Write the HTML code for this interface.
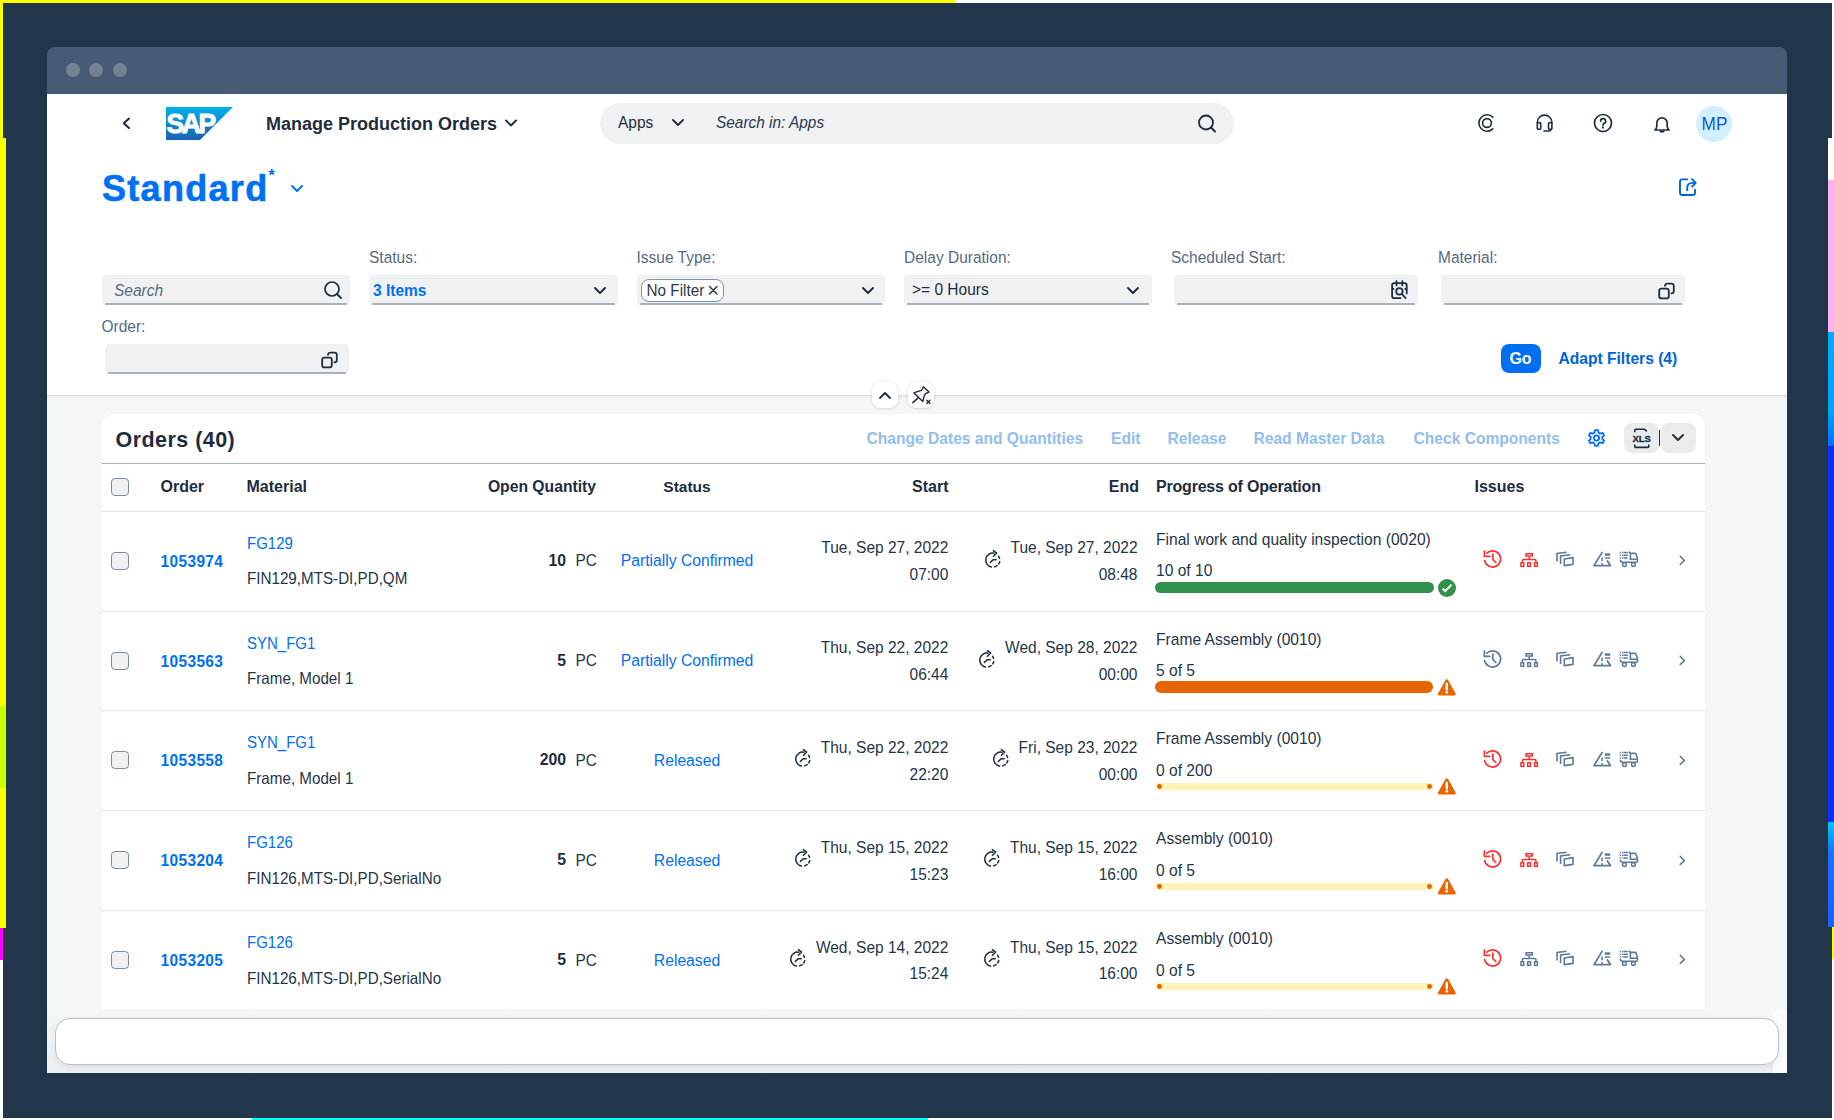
<!DOCTYPE html>
<html><head><meta charset="utf-8">
<style>
*{box-sizing:border-box;margin:0;padding:0}
html,body{width:1834px;height:1120px;overflow:hidden}
body{background:#22364b;font-family:"Liberation Sans",sans-serif;color:#1d2d3e;position:relative}
.a{position:absolute}
.t{position:absolute;white-space:nowrap;line-height:1}
.r{text-align:right}
.dot{position:absolute;width:14px;height:14px;border-radius:50%;background:#748495;top:63px}
.lbl{font-size:15.5px;color:#556b82}
.fld{position:absolute;background:#eff1f2;border-radius:4px;height:30px;top:275px}
.fld:after{content:"";position:absolute;left:3px;right:3px;bottom:0;height:1.8px;background:#a7b2bd;border-radius:1px}
.act{font-size:15.6px;color:#92bdee;font-weight:bold}
.hd{font-size:16px;font-weight:bold;color:#1d2d3e}
.cb{position:absolute;width:18px;height:18px;border:1.1px solid #788ca0;border-radius:4px;background:#eff1f2;left:111px}
.ico{position:absolute;overflow:visible}
.sy{transform:scaleY(1.1);transform-origin:0 0.85em}
</style></head><body>
<!-- edge strips -->
<div class="a" style="left:0;top:0;width:955px;height:3px;background:#ffff00"></div>
<div class="a" style="left:955px;top:0;width:879px;height:3px;background:#fdfdfd"></div>
<div class="a" style="left:0;top:0;width:3px;height:138px;background:#ffff00"></div>
<div class="a" style="left:0;top:138px;width:6px;height:790px;background:#ffff00"></div>
<div class="a" style="left:0;top:705.5px;width:6px;height:82px;background:#c8ff00"></div>
<div class="a" style="left:0;top:927.5px;width:3px;height:32.5px;background:#ff00ff"></div>
<div class="a" style="left:0;top:960px;width:3px;height:160px;background:#fdfdfd"></div>
<div class="a" style="left:1832px;top:0;width:2px;height:138px;background:#fdfdfd"></div>
<div class="a" style="left:1828px;top:138px;width:6px;height:42px;background:#ffffff"></div>
<div class="a" style="left:1828px;top:180px;width:6px;height:152px;background:#ffb0f4"></div>
<div class="a" style="left:1828px;top:332px;width:6px;height:114px;background:linear-gradient(#00acff,#00a2ff 70%,#0a6cff)"></div>
<div class="a" style="left:1828px;top:446px;width:6px;height:376px;background:#0a2cff"></div>
<div class="a" style="left:1828px;top:822px;width:6px;height:105px;background:linear-gradient(#00c8ff,#1a70ff 30%,#1a60ff)"></div>
<div class="a" style="left:1832px;top:927px;width:2px;height:32px;background:#ffff00"></div>
<div class="a" style="left:1832px;top:959px;width:2px;height:161px;background:#fdfdfd"></div>
<div class="a" style="left:0;top:1117.5px;width:252px;height:2.5px;background:#fdfdfd"></div>
<div class="a" style="left:252px;top:1117.5px;width:676px;height:2.5px;background:#00ffff"></div>
<div class="a" style="left:928px;top:1117.5px;width:906px;height:2.5px;background:#fdfdfd"></div>

<!-- window -->
<div class="a" style="left:47px;top:47px;width:1740px;height:60px;background:#475c74;border-radius:8px 8px 0 0"></div>
<div class="dot" style="left:66px"></div>
<div class="dot" style="left:89px"></div>
<div class="dot" style="left:113px"></div>
<div class="a" style="left:47px;top:94px;width:1740px;height:979px;background:#f5f6f7"></div>
<div class="a" style="left:47px;top:94px;width:1740px;height:302px;background:#fff;border-bottom:1px solid #d9dcdf"></div>
<div class="a" style="left:47px;top:396px;width:1740px;height:5px;background:linear-gradient(rgba(0,20,40,0.035),rgba(0,20,40,0))"></div>

<!-- SHELLBAR -->
<svg class="ico" style="left:118px;top:113px" width="16" height="20" viewBox="0 0 16 20"><path d="M11 5.6 L5.9 10.3 L11 15" fill="none" stroke="#1d2d3e" stroke-width="2.1" stroke-linecap="round" stroke-linejoin="round"/></svg>
<svg class="ico" style="left:166px;top:106px" width="68" height="34" viewBox="0 0 68 34">
<defs><linearGradient id="sapg" x1="0" y1="0" x2="0" y2="1"><stop offset="0" stop-color="#00b1eb"/><stop offset="1" stop-color="#1a62b4"/></linearGradient></defs>
<path d="M0 1 H67 L34 34 H0 Z" fill="url(#sapg)"/>
<text x="0.6" y="27.3" font-family="Liberation Sans" font-weight="bold" font-size="28" fill="#fff" stroke="#fff" stroke-width="1" letter-spacing="-2.6" textLength="47" lengthAdjust="spacingAndGlyphs">SAP</text>
</svg>
<div class="t" style="left:266px;top:114.5px;font-size:18px;font-weight:bold;color:#1d2d3e">Manage Production Orders</div>
<svg class="ico" style="left:503px;top:117px" width="16" height="12" viewBox="0 0 16 12"><path d="M3 3.5 L8 8.5 L13 3.5" fill="none" stroke="#1d2d3e" stroke-width="1.9" stroke-linecap="round" stroke-linejoin="round"/></svg>

<div class="a" style="left:600px;top:103px;width:634px;height:41px;border-radius:21px;background:#eff1f2"></div>
<div class="t sy" style="left:618px;top:114.5px;font-size:15.5px;color:#1d2d3e">Apps</div>
<svg class="ico" style="left:670px;top:116px" width="16" height="12" viewBox="0 0 16 12"><path d="M3 4 L8 9 L13 4" fill="none" stroke="#1d2d3e" stroke-width="1.9" stroke-linecap="round" stroke-linejoin="round"/></svg>
<div class="t sy" style="left:716px;top:115px;font-size:15.4px;font-style:italic;color:#2b3a4a">Search in: Apps</div>
<svg class="ico" style="left:1196px;top:112px" width="22" height="22" viewBox="0 0 22 22"><circle cx="10" cy="10.5" r="7" fill="none" stroke="#1d2d3e" stroke-width="1.8"/><path d="M15 15.5 L19 19.5" stroke="#1d2d3e" stroke-width="1.9" stroke-linecap="round"/></svg>

<!-- shell icons -->
<svg class="ico" style="left:1474px;top:111px" width="24" height="24" viewBox="0 0 24 24"><path d="M18.8 6.1 A8.2 8.2 0 1 0 18.8 17.9" fill="none" stroke="#1d2d3e" stroke-width="1.6" stroke-linecap="round"/><circle cx="13" cy="12" r="4.4" fill="none" stroke="#1d2d3e" stroke-width="1.6"/></svg>
<svg class="ico" style="left:1532px;top:111px" width="24" height="24" viewBox="0 0 24 24"><path d="M5.3 12.5 V11.4 A7.3 7.3 0 0 1 19.9 11.4 V12.5" fill="none" stroke="#1d2d3e" stroke-width="1.6"/><rect x="5.3" y="11.8" width="3.4" height="6.4" rx="0.6" fill="none" stroke="#1d2d3e" stroke-width="1.6"/><rect x="16.5" y="11.8" width="3.4" height="6.4" rx="0.6" fill="none" stroke="#1d2d3e" stroke-width="1.6"/><path d="M19.2 18.4 Q18.8 20 17 20 H12" fill="none" stroke="#1d2d3e" stroke-width="1.6" stroke-linecap="round"/></svg>
<svg class="ico" style="left:1591px;top:111px" width="24" height="24" viewBox="0 0 24 24"><circle cx="12" cy="12" r="8.5" fill="none" stroke="#1d2d3e" stroke-width="1.7"/><path d="M9.6 10.2 A2.5 2.5 0 1 1 12.7 12.5 Q12 12.9 12 14.2" fill="none" stroke="#1d2d3e" stroke-width="1.7" stroke-linecap="round"/><circle cx="12" cy="16.6" r="1.05" fill="#1d2d3e"/></svg>
<svg class="ico" style="left:1650px;top:111.8px" width="24" height="24" viewBox="0 0 24 24"><path d="M5 18 Q6.8 16.5 6.8 14 V11 A5.2 5.2 0 0 1 17.2 11 V14 Q17.2 16.5 19 18 Z" fill="none" stroke="#1d2d3e" stroke-width="1.7" stroke-linejoin="round"/><path d="M10.5 19.5 H13.5" stroke="#1d2d3e" stroke-width="2" stroke-linecap="round"/></svg>
<div class="a" style="left:1696px;top:106px;width:36px;height:36px;border-radius:50%;background:#d1efff"></div>
<div class="t sy" style="left:1696.5px;top:116px;width:36px;text-align:center;font-size:17.2px;color:#0a5ad6">MP</div>

<!-- Title -->
<div class="t" style="left:102px;top:170.5px;font-size:36px;font-weight:bold;color:#0070f2;letter-spacing:1.3px;-webkit-text-stroke:0.6px #0070f2">Standard</div>
<div class="t" style="left:268.5px;top:168px;font-size:16px;font-weight:bold;color:#0070f2">*</div>
<svg class="ico" style="left:289px;top:182px" width="16" height="12" viewBox="0 0 16 12"><path d="M3 4 L8 9 L13 4" fill="none" stroke="#0070f2" stroke-width="1.9" stroke-linecap="round" stroke-linejoin="round"/></svg>
<svg class="ico" style="left:1676px;top:175px" width="24" height="24" viewBox="0 0 24 24"><path d="M11.2 4.4 H6.2 Q4 4.4 4 6.6 V17.8 Q4 20 6.2 20 H16.8 Q19 20 19 17.8 V14.6" fill="none" stroke="#0064d9" stroke-width="1.9" stroke-linecap="round"/><path d="M11.2 15.3 V13.2 Q11.2 7.9 16.4 7.9 H19.4 M16 4.2 L19.7 7.9 L16.2 11.7" fill="none" stroke="#0064d9" stroke-width="1.9" stroke-linecap="round" stroke-linejoin="round"/></svg>

<!-- FILTER BAR -->
<div class="t lbl sy" style="left:369px;top:250.3px">Status:</div>
<div class="t lbl sy" style="left:636.5px;top:250.3px">Issue Type:</div>
<div class="t lbl sy" style="left:904px;top:250.3px">Delay Duration:</div>
<div class="t lbl sy" style="left:1171px;top:250.3px">Scheduled Start:</div>
<div class="t lbl sy" style="left:1438px;top:250.3px">Material:</div>
<div class="t lbl sy" style="left:101.5px;top:319.3px">Order:</div>

<div class="fld" style="left:102px;width:248px"></div>
<div class="t sy" style="left:114px;top:283px;font-size:15.5px;font-style:italic;color:#556b82">Search</div>
<svg class="ico" style="left:322px;top:279px" width="22" height="22" viewBox="0 0 22 22"><circle cx="10" cy="10" r="7" fill="none" stroke="#1d2d3e" stroke-width="1.7"/><path d="M15 15 L19 19" stroke="#1d2d3e" stroke-width="1.8" stroke-linecap="round"/></svg>

<div class="fld" style="left:369px;width:249px"></div>
<div class="t sy" style="left:373px;top:283.3px;font-size:15.5px;font-weight:bold;color:#0070f2">3 Items</div>
<svg class="ico" style="left:591.5px;top:284.5px" width="16" height="12" viewBox="0 0 16 12"><path d="M3 3 L8 8 L13 3" fill="none" stroke="#1d2d3e" stroke-width="1.9" stroke-linecap="round" stroke-linejoin="round"/></svg>

<div class="fld" style="left:636.5px;width:248px"></div>
<div class="a" style="left:640.5px;top:279px;width:83px;height:22.5px;border:1px solid #7d92a8;border-radius:8px;background:#fff"></div>
<div class="t sy" style="left:646.5px;top:283px;font-size:15.3px;color:#2a3a4b">No Filter</div>
<svg class="ico" style="left:707px;top:284px" width="13" height="13" viewBox="0 0 13 13"><path d="M2.5 2.5 L10 10 M10 2.5 L2.5 10" stroke="#1d2d3e" stroke-width="1.4" stroke-linecap="round"/></svg>
<svg class="ico" style="left:859.5px;top:284.5px" width="16" height="12" viewBox="0 0 16 12"><path d="M3 3 L8 8 L13 3" fill="none" stroke="#1d2d3e" stroke-width="1.9" stroke-linecap="round" stroke-linejoin="round"/></svg>

<div class="fld" style="left:904px;width:248px"></div>
<div class="t sy" style="left:912px;top:281.8px;font-size:15.5px;color:#1d2d3e">&gt;= 0 Hours</div>
<svg class="ico" style="left:1124.5px;top:284.5px" width="16" height="12" viewBox="0 0 16 12"><path d="M3 3 L8 8 L13 3" fill="none" stroke="#1d2d3e" stroke-width="1.9" stroke-linecap="round" stroke-linejoin="round"/></svg>

<div class="fld" style="left:1173.5px;width:244px"></div>
<svg class="ico" style="left:1388px;top:278px" width="22" height="24" viewBox="0 0 22 24"><path d="M12.6 20.1 H6.3 Q4.1 20.1 4.1 17.9 V7.4 Q4.1 5.2 6.3 5.2 H16.5 Q18.7 5.2 18.7 7.4 V15.4" fill="none" stroke="#1d2d3e" stroke-width="1.8" stroke-linecap="round"/><path d="M8.5 3.2 V7.4 M14.3 3.2 V7.4" stroke="#1d2d3e" stroke-width="1.8" stroke-linecap="round"/><path d="M4.1 11 H6.2 M16.6 11 H18.7" stroke="#1d2d3e" stroke-width="1.8"/><circle cx="11.4" cy="13.4" r="3.2" fill="none" stroke="#1d2d3e" stroke-width="1.8"/><path d="M13.8 15.9 L17.6 20.2" stroke="#1d2d3e" stroke-width="1.8" stroke-linecap="round"/></svg>

<div class="fld" style="left:1441px;width:244px"></div>
<svg class="ico" style="left:1656px;top:280px" width="22" height="22" viewBox="0 0 22 22"><rect x="3.2" y="8.6" width="9.6" height="9.8" rx="2.2" fill="none" stroke="#1d2d3e" stroke-width="1.8"/><path d="M9 5.8 Q9.3 3.6 11.3 3.6 H15.6 Q17.8 3.6 17.8 5.8 V11 Q17.8 13.4 15.4 13.4" fill="none" stroke="#1d2d3e" stroke-width="1.8" stroke-linecap="round"/></svg>

<div class="fld" style="left:104.5px;width:244px;top:344px"></div>
<svg class="ico" style="left:319px;top:349px" width="22" height="22" viewBox="0 0 22 22"><rect x="3.2" y="8.6" width="9.6" height="9.8" rx="2.2" fill="none" stroke="#1d2d3e" stroke-width="1.8"/><path d="M9 5.8 Q9.3 3.6 11.3 3.6 H15.6 Q17.8 3.6 17.8 5.8 V11 Q17.8 13.4 15.4 13.4" fill="none" stroke="#1d2d3e" stroke-width="1.8" stroke-linecap="round"/></svg>

<div class="a" style="left:1500.5px;top:344px;width:40px;height:29px;border-radius:8px;background:#0070f2"></div>
<div class="t" style="left:1500.5px;top:350.5px;width:40px;text-align:center;font-size:16px;font-weight:bold;color:#fff">Go</div>
<div class="t" style="left:1558.5px;top:351px;font-size:15.6px;font-weight:bold;color:#0064d9">Adapt Filters (4)</div>

<!-- collapse / pin -->
<div class="a" style="left:872px;top:382px;width:26px;height:26px;border-radius:8px;background:#fff;box-shadow:0 0 3px rgba(0,0,0,0.12),0 1px 2px rgba(0,0,0,0.08)"></div>
<svg class="ico" style="left:877px;top:387px" width="16" height="16" viewBox="0 0 16 16"><path d="M3 11 L8 6 L13 11" fill="none" stroke="#1d2d3e" stroke-width="1.8" stroke-linecap="round" stroke-linejoin="round"/></svg>
<div class="a" style="left:908px;top:382px;width:26px;height:26px;border-radius:8px;background:#fff;box-shadow:0 0 3px rgba(0,0,0,0.12),0 1px 2px rgba(0,0,0,0.08)"></div>
<svg class="ico" style="left:910px;top:384px" width="24" height="24" viewBox="0 0 24 24"><path d="M3.9 8.9 Q8 7.2 11.6 6.4 L13.4 2.8 L19 8 L15.2 9.8 Q13.7 12.6 12.8 17.6 Z" fill="none" stroke="#1d2d3e" stroke-width="1.4" stroke-linejoin="round"/><path d="M7.9 14.1 L2.8 18.6" stroke="#1d2d3e" stroke-width="1.5" stroke-linecap="round"/><path d="M16.8 16.2 L20 19.4 M20 16.2 L16.8 19.4" stroke="#1d2d3e" stroke-width="1.4" stroke-linecap="round"/></svg>

<!--TABLE-->
<div class="a" style="left:102px;top:414px;width:1603px;height:595px;background:#fff;border-radius:12px 12px 0 0;box-shadow:0 0 2px rgba(0,0,0,0.05)"></div>
<div class="t" style="left:115.5px;top:429.53px;font-size:21.5px;color:#1d2d3e;font-weight:bold;letter-spacing:0.45px">Orders (40)</div>
<div class="t" style="left:866.5px;top:430.54px;font-size:15.6px;color:#92bdee;font-weight:bold;">Change Dates and Quantities</div>
<div class="t" style="left:1111px;top:430.54px;font-size:15.6px;color:#92bdee;font-weight:bold;">Edit</div>
<div class="t" style="left:1167.5px;top:430.54px;font-size:15.6px;color:#92bdee;font-weight:bold;">Release</div>
<div class="t" style="left:1253.5px;top:430.54px;font-size:15.6px;color:#92bdee;font-weight:bold;">Read Master Data</div>
<div class="t" style="left:1413.5px;top:430.54px;font-size:15.6px;color:#92bdee;font-weight:bold;">Check Components</div>
<svg class="ico" style="left:1586px;top:428px" width="21" height="21" viewBox="0 0 21 21"><path d="M9 2.2 H12 L12.5 4.6 L14.3 5.6 L16.6 4.8 L18.1 7.4 L16.3 9 V11 L18.1 12.6 L16.6 15.2 L14.3 14.4 L12.5 15.4 L12 17.8 H9 L8.5 15.4 L6.7 14.4 L4.4 15.2 L2.9 12.6 L4.7 11 V9 L2.9 7.4 L4.4 4.8 L6.7 5.6 L8.5 4.6 Z" fill="none" stroke="#0070f2" stroke-width="1.8" stroke-linejoin="round"/><circle cx="10.5" cy="10" r="2.6" fill="none" stroke="#0070f2" stroke-width="1.8"/></svg>
<div class="a" style="left:1624px;top:423px;width:35px;height:30px;border-radius:8px;background:#e9ebed"></div>
<div class="a" style="left:1660.5px;top:423px;width:35.5px;height:30px;border-radius:8px;background:#e9ebed"></div>
<div class="a" style="left:1659.2px;top:430px;width:1.2px;height:16px;background:#1d2d3e"></div>
<svg class="ico" style="left:1630px;top:427px" width="24" height="22" viewBox="0 0 24 22"><path d="M4.8 5.2 V3 Q4.8 2.2 5.6 2.2 H14.6 L16.8 4.4" fill="none" stroke="#1d2d3e" stroke-width="1.6"/><path d="M4.8 17.6 V19.6 Q4.8 20.4 5.6 20.4 H18 Q18.8 20.4 18.8 19.6 V17.6" fill="none" stroke="#1d2d3e" stroke-width="1.6"/><text x="2.4" y="15.2" font-family="Liberation Sans" font-weight="bold" font-size="9.6" fill="#1d2d3e" stroke="#1d2d3e" stroke-width="0.3" textLength="18.6" lengthAdjust="spacingAndGlyphs">XLS</text></svg>
<svg class="ico" style="left:1670px;top:430px" width="16" height="14" viewBox="0 0 16 14"><path d="M3 5 L8 10 L13 5" fill="none" stroke="#1d2d3e" stroke-width="1.9" stroke-linecap="round" stroke-linejoin="round"/></svg>
<div class="a" style="left:102px;top:463px;width:1603px;height:1px;background:#a9b4be"></div>
<div class="a" style="left:102px;top:510.5px;width:1603px;height:1px;background:#e5e5e5"></div>
<div class="cb" style="top:477.5px"></div>
<div class="t" style="left:160.5px;top:479.00px;font-size:16px;color:#1d2d3e;font-weight:bold;">Order</div>
<div class="t" style="left:246.5px;top:479.00px;font-size:16px;color:#1d2d3e;font-weight:bold;">Material</div>
<div class="t" style="right:1238px;top:479.25px;font-size:15.7px;color:#1d2d3e;font-weight:bold;text-align:right;">Open Quantity</div>
<div class="t" style="left:537.0px;width:300px;top:479.43px;font-size:15.5px;color:#1d2d3e;font-weight:bold;text-align:center">Status</div>
<div class="t" style="right:885.5px;top:479.00px;font-size:16px;color:#1d2d3e;font-weight:bold;text-align:right;">Start</div>
<div class="t" style="right:695px;top:479.00px;font-size:16px;color:#1d2d3e;font-weight:bold;text-align:right;">End</div>
<div class="t" style="left:1156px;top:479.00px;font-size:16px;color:#1d2d3e;font-weight:bold;letter-spacing:-0.2px">Progress of Operation</div>
<div class="t" style="left:1474.5px;top:479.00px;font-size:16px;color:#1d2d3e;font-weight:bold;">Issues</div>
<div class="a" style="left:102px;top:610.5px;width:1603px;height:1px;background:#e5e5e5"></div>
<div class="cb" style="top:551.8px"></div>
<div class="t sy" style="left:160.5px;top:553.62px;font-size:15.5px;color:#0070f2;font-weight:bold;letter-spacing:0.35px">1053974</div>
<div class="t sy" style="left:247px;top:535.55px;font-size:15px;color:#0070f2;font-weight:normal;">FG129</div>
<div class="t sy" style="left:247px;top:571.28px;font-size:15.2px;color:#253547;font-weight:normal;">FIN129,MTS-DI,PD,QM</div>
<div class="t sy" style="right:1268px;top:552.77px;font-size:15.8px;color:#1d2d3e;font-weight:bold;text-align:right;">10</div>
<div class="t sy" style="left:575.5px;top:553.11px;font-size:15.4px;color:#253547;font-weight:normal;">PC</div>
<div class="t sy" style="left:537.0px;width:300px;top:553.25px;font-size:15.7px;color:#0070f2;font-weight:normal;text-align:center">Partially Confirmed</div>
<div class="t sy" style="right:885.7px;top:540.43px;font-size:15.5px;color:#253547;font-weight:normal;text-align:right;">Tue, Sep 27, 2022</div>
<div class="t sy" style="right:885.7px;top:567.03px;font-size:15.5px;color:#253547;font-weight:normal;text-align:right;">07:00</div>
<div class="t sy" style="right:696.5px;top:540.43px;font-size:15.5px;color:#253547;font-weight:normal;text-align:right;">Tue, Sep 27, 2022</div>
<div class="t sy" style="right:696.5px;top:567.03px;font-size:15.5px;color:#253547;font-weight:normal;text-align:right;">08:48</div>
<svg class="ico" style="left:983.53078125px;top:549.5px" width="20" height="20" viewBox="0 0 20 20"><path d="M7.5 17 A7 7 0 0 1 10 3.2" fill="none" stroke="#1d2d3e" stroke-width="1.5" stroke-linecap="round"/><path d="M9.4 0.6 L12.6 3.2 L9.4 6.2" fill="none" stroke="#1d2d3e" stroke-width="1.5" stroke-linecap="round" stroke-linejoin="round"/><path d="M14.6 6.2 L15.6 8.4 M15.8 11.6 L14.8 13.9 M13.2 15.6 L10.6 16.9" fill="none" stroke="#1d2d3e" stroke-width="1.5" stroke-linecap="round"/><path d="M6.4 12.4 L9.2 9.8 L12.2 9.8" fill="none" stroke="#1d2d3e" stroke-width="1.5" stroke-linecap="round" stroke-linejoin="round"/></svg>
<div class="t sy" style="left:1156px;top:531.74px;font-size:15.6px;color:#253547;font-weight:normal;">Final work and quality inspection (0020)</div>
<div class="t sy" style="left:1156px;top:563.14px;font-size:15.6px;color:#253547;font-weight:normal;">10 of 10</div>
<div class="a" style="left:1155px;top:582px;width:278.5px;height:11.3px;border-radius:6px;background:#30914c"></div>
<svg class="ico" style="left:1438px;top:579px" width="18" height="18" viewBox="0 0 18 18"><circle cx="9" cy="9" r="9" fill="#30914c"/><path d="M4.6 9.6 L7.2 12 L13.6 5.6" fill="none" stroke="#fff" stroke-width="2"/></svg>
<svg class="ico" style="left:1482.5px;top:549px" width="20" height="20" viewBox="0 0 20 20"><path d="M1.6 11.6 A8.1 8.1 0 1 0 3.8 4.2" fill="none" stroke="#f53232" stroke-width="1.7" stroke-linecap="round"/><path d="M1.4 2 V7.3 H6.8" fill="none" stroke="#f53232" stroke-width="1.7" stroke-linecap="round" stroke-linejoin="round"/><path d="M9.9 5.1 V10.6 L12.9 13.5" fill="none" stroke="#f53232" stroke-width="1.7" stroke-linecap="round" stroke-linejoin="round"/></svg>
<svg class="ico" style="left:1518.8px;top:549px" width="20" height="20" viewBox="0 0 20 20"><rect x="7.05" y="4.75" width="6.2" height="2.3" fill="none" stroke="#f53232" stroke-width="1.5"/><path d="M10.15 7.8 V10.6 M3.35 13.2 V11.8 Q3.35 10.6 4.55 10.6 H15.75 Q16.95 10.6 16.95 11.8 V13.2" fill="none" stroke="#f53232" stroke-width="1.5"/><rect x="1.95" y="13.75" width="2.8" height="3.6" fill="none" stroke="#f53232" stroke-width="1.5"/><rect x="8.75" y="13.75" width="2.8" height="3.6" fill="none" stroke="#f53232" stroke-width="1.5"/><rect x="15.55" y="13.75" width="2.8" height="3.6" fill="none" stroke="#f53232" stroke-width="1.5"/></svg>
<svg class="ico" style="left:1555px;top:549px" width="20" height="20" viewBox="0 0 20 20"><path d="M2 12.4 V4.4 L11.6 3.2" fill="none" stroke="#5d7a96" stroke-width="1.6"/><path d="M5.6 15 V6.9 L15.2 5.8" fill="none" stroke="#5d7a96" stroke-width="1.6"/><path d="M9.3 10 L18 8.6 V15.4 L9.3 16.6 Z" fill="none" stroke="#5d7a96" stroke-width="1.6" stroke-linejoin="round"/></svg>
<svg class="ico" style="left:1591.5px;top:549px" width="20" height="20" viewBox="0 0 20 20"><path d="M10.1 3.4 L2 16.6 H18.4 L15.4 12" fill="none" stroke="#5d7a96" stroke-width="1.8" stroke-linejoin="round" stroke-linecap="round"/><path d="M10 8.6 V12.2 M10 14 V16" stroke="#5d7a96" stroke-width="1.5"/><path d="M12.8 4.3 H18.2 V6.8 H12.8 Z" fill="#5d7a96"/><path d="M12.8 8.3 H18.2 V9.8 H12.8 Z" fill="#5d7a96"/></svg>
<svg class="ico" style="left:1618.8px;top:549px" width="20" height="20" viewBox="0 0 20 20"><path d="M1.3 2.8 V10.2 M3.7 2.8 V10.2" stroke="#5d7a96" stroke-width="1.3" stroke-dasharray="1.4 1.3"/><path d="M4.6 3.5 H8.8 M4.6 6.3 H8.8 M4.6 9 H8.8" stroke="#5d7a96" stroke-width="1.5"/><path d="M10.2 3.2 L11.6 4.4 H16 Q16.8 4.4 17.1 5.2 L18.4 9.6 V12.2 Q18.4 13.2 17.4 13.2 H3.6 Q1.6 13.2 1.4 11.2" fill="none" stroke="#5d7a96" stroke-width="1.6" stroke-linejoin="round" stroke-linecap="round"/><path d="M11.4 4.6 V10.2 H18.2" fill="none" stroke="#5d7a96" stroke-width="1.6"/><circle cx="5.4" cy="15.6" r="1.9" fill="none" stroke="#5d7a96" stroke-width="1.5"/><circle cx="14.4" cy="15.6" r="1.9" fill="none" stroke="#5d7a96" stroke-width="1.5"/></svg>
<svg class="ico" style="left:1676px;top:553px" width="12" height="14" viewBox="0 0 12 14"><path d="M4.2 3.2 L8.4 7.4 L4.2 11.6" fill="none" stroke="#556b82" stroke-width="1.4" stroke-linecap="round" stroke-linejoin="round"/></svg>
<div class="a" style="left:102px;top:710.1px;width:1603px;height:1px;background:#e5e5e5"></div>
<div class="cb" style="top:651.8px"></div>
<div class="t sy" style="left:160.5px;top:653.62px;font-size:15.5px;color:#0070f2;font-weight:bold;letter-spacing:0.35px">1053563</div>
<div class="t sy" style="left:247px;top:635.55px;font-size:15px;color:#0070f2;font-weight:normal;">SYN_FG1</div>
<div class="t sy" style="left:247px;top:671.28px;font-size:15.2px;color:#253547;font-weight:normal;">Frame, Model 1</div>
<div class="t sy" style="right:1268px;top:652.77px;font-size:15.8px;color:#1d2d3e;font-weight:bold;text-align:right;">5</div>
<div class="t sy" style="left:575.5px;top:653.11px;font-size:15.4px;color:#253547;font-weight:normal;">PC</div>
<div class="t sy" style="left:537.0px;width:300px;top:653.25px;font-size:15.7px;color:#0070f2;font-weight:normal;text-align:center">Partially Confirmed</div>
<div class="t sy" style="right:885.7px;top:640.43px;font-size:15.5px;color:#253547;font-weight:normal;text-align:right;">Thu, Sep 22, 2022</div>
<div class="t sy" style="right:885.7px;top:667.03px;font-size:15.5px;color:#253547;font-weight:normal;text-align:right;">06:44</div>
<div class="t sy" style="right:696.5px;top:640.43px;font-size:15.5px;color:#253547;font-weight:normal;text-align:right;">Wed, Sep 28, 2022</div>
<div class="t sy" style="right:696.5px;top:667.03px;font-size:15.5px;color:#253547;font-weight:normal;text-align:right;">00:00</div>
<svg class="ico" style="left:978.074296875px;top:649.5px" width="20" height="20" viewBox="0 0 20 20"><path d="M7.5 17 A7 7 0 0 1 10 3.2" fill="none" stroke="#1d2d3e" stroke-width="1.5" stroke-linecap="round"/><path d="M9.4 0.6 L12.6 3.2 L9.4 6.2" fill="none" stroke="#1d2d3e" stroke-width="1.5" stroke-linecap="round" stroke-linejoin="round"/><path d="M14.6 6.2 L15.6 8.4 M15.8 11.6 L14.8 13.9 M13.2 15.6 L10.6 16.9" fill="none" stroke="#1d2d3e" stroke-width="1.5" stroke-linecap="round"/><path d="M6.4 12.4 L9.2 9.8 L12.2 9.8" fill="none" stroke="#1d2d3e" stroke-width="1.5" stroke-linecap="round" stroke-linejoin="round"/></svg>
<div class="t sy" style="left:1156px;top:631.74px;font-size:15.6px;color:#253547;font-weight:normal;">Frame Assembly (0010)</div>
<div class="t sy" style="left:1156px;top:663.14px;font-size:15.6px;color:#253547;font-weight:normal;">5 of 5</div>
<div class="a" style="left:1155px;top:681.3px;width:278.2px;height:12px;border-radius:6px;background:#e76500"></div>
<svg class="ico" style="left:1437.2px;top:677.8px" width="19.6" height="18.5" viewBox="0 0 18 17"><path d="M9 1.2 Q9.8 1.2 10.3 2 L17.2 14.4 Q17.6 15.8 16.2 16 H1.8 Q0.4 15.8 0.8 14.4 L7.7 2 Q8.2 1.2 9 1.2 Z" fill="#e76500"/><path d="M9 5.4 V10.4" stroke="#fff" stroke-width="2.2" stroke-linecap="round"/><circle cx="9" cy="13.2" r="1.2" fill="#fff"/></svg>
<svg class="ico" style="left:1482.5px;top:649px" width="20" height="20" viewBox="0 0 20 20"><path d="M1.6 11.6 A8.1 8.1 0 1 0 3.8 4.2" fill="none" stroke="#5d7a96" stroke-width="1.7" stroke-linecap="round"/><path d="M1.4 2 V7.3 H6.8" fill="none" stroke="#5d7a96" stroke-width="1.7" stroke-linecap="round" stroke-linejoin="round"/><path d="M9.9 5.1 V10.6 L12.9 13.5" fill="none" stroke="#5d7a96" stroke-width="1.7" stroke-linecap="round" stroke-linejoin="round"/></svg>
<svg class="ico" style="left:1518.8px;top:649px" width="20" height="20" viewBox="0 0 20 20"><rect x="7.05" y="4.75" width="6.2" height="2.3" fill="none" stroke="#5d7a96" stroke-width="1.5"/><path d="M10.15 7.8 V10.6 M3.35 13.2 V11.8 Q3.35 10.6 4.55 10.6 H15.75 Q16.95 10.6 16.95 11.8 V13.2" fill="none" stroke="#5d7a96" stroke-width="1.5"/><rect x="1.95" y="13.75" width="2.8" height="3.6" fill="none" stroke="#5d7a96" stroke-width="1.5"/><rect x="8.75" y="13.75" width="2.8" height="3.6" fill="none" stroke="#5d7a96" stroke-width="1.5"/><rect x="15.55" y="13.75" width="2.8" height="3.6" fill="none" stroke="#5d7a96" stroke-width="1.5"/></svg>
<svg class="ico" style="left:1555px;top:649px" width="20" height="20" viewBox="0 0 20 20"><path d="M2 12.4 V4.4 L11.6 3.2" fill="none" stroke="#5d7a96" stroke-width="1.6"/><path d="M5.6 15 V6.9 L15.2 5.8" fill="none" stroke="#5d7a96" stroke-width="1.6"/><path d="M9.3 10 L18 8.6 V15.4 L9.3 16.6 Z" fill="none" stroke="#5d7a96" stroke-width="1.6" stroke-linejoin="round"/></svg>
<svg class="ico" style="left:1591.5px;top:649px" width="20" height="20" viewBox="0 0 20 20"><path d="M10.1 3.4 L2 16.6 H18.4 L15.4 12" fill="none" stroke="#5d7a96" stroke-width="1.8" stroke-linejoin="round" stroke-linecap="round"/><path d="M10 8.6 V12.2 M10 14 V16" stroke="#5d7a96" stroke-width="1.5"/><path d="M12.8 4.3 H18.2 V6.8 H12.8 Z" fill="#5d7a96"/><path d="M12.8 8.3 H18.2 V9.8 H12.8 Z" fill="#5d7a96"/></svg>
<svg class="ico" style="left:1618.8px;top:649px" width="20" height="20" viewBox="0 0 20 20"><path d="M1.3 2.8 V10.2 M3.7 2.8 V10.2" stroke="#5d7a96" stroke-width="1.3" stroke-dasharray="1.4 1.3"/><path d="M4.6 3.5 H8.8 M4.6 6.3 H8.8 M4.6 9 H8.8" stroke="#5d7a96" stroke-width="1.5"/><path d="M10.2 3.2 L11.6 4.4 H16 Q16.8 4.4 17.1 5.2 L18.4 9.6 V12.2 Q18.4 13.2 17.4 13.2 H3.6 Q1.6 13.2 1.4 11.2" fill="none" stroke="#5d7a96" stroke-width="1.6" stroke-linejoin="round" stroke-linecap="round"/><path d="M11.4 4.6 V10.2 H18.2" fill="none" stroke="#5d7a96" stroke-width="1.6"/><circle cx="5.4" cy="15.6" r="1.9" fill="none" stroke="#5d7a96" stroke-width="1.5"/><circle cx="14.4" cy="15.6" r="1.9" fill="none" stroke="#5d7a96" stroke-width="1.5"/></svg>
<svg class="ico" style="left:1676px;top:653px" width="12" height="14" viewBox="0 0 12 14"><path d="M4.2 3.2 L8.4 7.4 L4.2 11.6" fill="none" stroke="#556b82" stroke-width="1.4" stroke-linecap="round" stroke-linejoin="round"/></svg>
<div class="a" style="left:102px;top:810.1px;width:1603px;height:1px;background:#e5e5e5"></div>
<div class="cb" style="top:751.4px"></div>
<div class="t sy" style="left:160.5px;top:753.23px;font-size:15.5px;color:#0070f2;font-weight:bold;letter-spacing:0.35px">1053558</div>
<div class="t sy" style="left:247px;top:735.15px;font-size:15px;color:#0070f2;font-weight:normal;">SYN_FG1</div>
<div class="t sy" style="left:247px;top:770.88px;font-size:15.2px;color:#253547;font-weight:normal;">Frame, Model 1</div>
<div class="t sy" style="right:1268px;top:752.37px;font-size:15.8px;color:#1d2d3e;font-weight:bold;text-align:right;">200</div>
<div class="t sy" style="left:575.5px;top:752.71px;font-size:15.4px;color:#253547;font-weight:normal;">PC</div>
<div class="t sy" style="left:537.0px;width:300px;top:752.86px;font-size:15.7px;color:#0070f2;font-weight:normal;text-align:center">Released</div>
<div class="t sy" style="right:885.7px;top:740.03px;font-size:15.5px;color:#253547;font-weight:normal;text-align:right;">Thu, Sep 22, 2022</div>
<div class="t sy" style="right:885.7px;top:766.63px;font-size:15.5px;color:#253547;font-weight:normal;text-align:right;">22:20</div>
<div class="t sy" style="right:696.5px;top:740.03px;font-size:15.5px;color:#253547;font-weight:normal;text-align:right;">Fri, Sep 23, 2022</div>
<div class="t sy" style="right:696.5px;top:766.63px;font-size:15.5px;color:#253547;font-weight:normal;text-align:right;">00:00</div>
<svg class="ico" style="left:793.7555859375px;top:749.1px" width="20" height="20" viewBox="0 0 20 20"><path d="M7.5 17 A7 7 0 0 1 10 3.2" fill="none" stroke="#1d2d3e" stroke-width="1.5" stroke-linecap="round"/><path d="M9.4 0.6 L12.6 3.2 L9.4 6.2" fill="none" stroke="#1d2d3e" stroke-width="1.5" stroke-linecap="round" stroke-linejoin="round"/><path d="M14.6 6.2 L15.6 8.4 M15.8 11.6 L14.8 13.9 M13.2 15.6 L10.6 16.9" fill="none" stroke="#1d2d3e" stroke-width="1.5" stroke-linecap="round"/><path d="M6.4 12.4 L9.2 9.8 L12.2 9.8" fill="none" stroke="#1d2d3e" stroke-width="1.5" stroke-linecap="round" stroke-linejoin="round"/></svg>
<svg class="ico" style="left:991.59078125px;top:749.1px" width="20" height="20" viewBox="0 0 20 20"><path d="M7.5 17 A7 7 0 0 1 10 3.2" fill="none" stroke="#1d2d3e" stroke-width="1.5" stroke-linecap="round"/><path d="M9.4 0.6 L12.6 3.2 L9.4 6.2" fill="none" stroke="#1d2d3e" stroke-width="1.5" stroke-linecap="round" stroke-linejoin="round"/><path d="M14.6 6.2 L15.6 8.4 M15.8 11.6 L14.8 13.9 M13.2 15.6 L10.6 16.9" fill="none" stroke="#1d2d3e" stroke-width="1.5" stroke-linecap="round"/><path d="M6.4 12.4 L9.2 9.8 L12.2 9.8" fill="none" stroke="#1d2d3e" stroke-width="1.5" stroke-linecap="round" stroke-linejoin="round"/></svg>
<div class="t sy" style="left:1156px;top:731.34px;font-size:15.6px;color:#253547;font-weight:normal;">Frame Assembly (0010)</div>
<div class="t sy" style="left:1156px;top:762.74px;font-size:15.6px;color:#253547;font-weight:normal;">0 of 200</div>
<div class="a" style="left:1155px;top:783.4px;width:278.5px;height:6.4px;border-radius:3.2px;background:#fff3b8"></div>
<div class="a" style="left:1157.3px;top:784.2px;width:4.8px;height:4.8px;border-radius:50%;background:#e76500"></div>
<div class="a" style="left:1426.8px;top:784.2px;width:4.8px;height:4.8px;border-radius:50%;background:#e76500"></div>
<svg class="ico" style="left:1437.2px;top:777.4px" width="19.6" height="18.5" viewBox="0 0 18 17"><path d="M9 1.2 Q9.8 1.2 10.3 2 L17.2 14.4 Q17.6 15.8 16.2 16 H1.8 Q0.4 15.8 0.8 14.4 L7.7 2 Q8.2 1.2 9 1.2 Z" fill="#e76500"/><path d="M9 5.4 V10.4" stroke="#fff" stroke-width="2.2" stroke-linecap="round"/><circle cx="9" cy="13.2" r="1.2" fill="#fff"/></svg>
<svg class="ico" style="left:1482.5px;top:748.6px" width="20" height="20" viewBox="0 0 20 20"><path d="M1.6 11.6 A8.1 8.1 0 1 0 3.8 4.2" fill="none" stroke="#f53232" stroke-width="1.7" stroke-linecap="round"/><path d="M1.4 2 V7.3 H6.8" fill="none" stroke="#f53232" stroke-width="1.7" stroke-linecap="round" stroke-linejoin="round"/><path d="M9.9 5.1 V10.6 L12.9 13.5" fill="none" stroke="#f53232" stroke-width="1.7" stroke-linecap="round" stroke-linejoin="round"/></svg>
<svg class="ico" style="left:1518.8px;top:748.6px" width="20" height="20" viewBox="0 0 20 20"><rect x="7.05" y="4.75" width="6.2" height="2.3" fill="none" stroke="#f53232" stroke-width="1.5"/><path d="M10.15 7.8 V10.6 M3.35 13.2 V11.8 Q3.35 10.6 4.55 10.6 H15.75 Q16.95 10.6 16.95 11.8 V13.2" fill="none" stroke="#f53232" stroke-width="1.5"/><rect x="1.95" y="13.75" width="2.8" height="3.6" fill="none" stroke="#f53232" stroke-width="1.5"/><rect x="8.75" y="13.75" width="2.8" height="3.6" fill="none" stroke="#f53232" stroke-width="1.5"/><rect x="15.55" y="13.75" width="2.8" height="3.6" fill="none" stroke="#f53232" stroke-width="1.5"/></svg>
<svg class="ico" style="left:1555px;top:748.6px" width="20" height="20" viewBox="0 0 20 20"><path d="M2 12.4 V4.4 L11.6 3.2" fill="none" stroke="#5d7a96" stroke-width="1.6"/><path d="M5.6 15 V6.9 L15.2 5.8" fill="none" stroke="#5d7a96" stroke-width="1.6"/><path d="M9.3 10 L18 8.6 V15.4 L9.3 16.6 Z" fill="none" stroke="#5d7a96" stroke-width="1.6" stroke-linejoin="round"/></svg>
<svg class="ico" style="left:1591.5px;top:748.6px" width="20" height="20" viewBox="0 0 20 20"><path d="M10.1 3.4 L2 16.6 H18.4 L15.4 12" fill="none" stroke="#5d7a96" stroke-width="1.8" stroke-linejoin="round" stroke-linecap="round"/><path d="M10 8.6 V12.2 M10 14 V16" stroke="#5d7a96" stroke-width="1.5"/><path d="M12.8 4.3 H18.2 V6.8 H12.8 Z" fill="#5d7a96"/><path d="M12.8 8.3 H18.2 V9.8 H12.8 Z" fill="#5d7a96"/></svg>
<svg class="ico" style="left:1618.8px;top:748.6px" width="20" height="20" viewBox="0 0 20 20"><path d="M1.3 2.8 V10.2 M3.7 2.8 V10.2" stroke="#5d7a96" stroke-width="1.3" stroke-dasharray="1.4 1.3"/><path d="M4.6 3.5 H8.8 M4.6 6.3 H8.8 M4.6 9 H8.8" stroke="#5d7a96" stroke-width="1.5"/><path d="M10.2 3.2 L11.6 4.4 H16 Q16.8 4.4 17.1 5.2 L18.4 9.6 V12.2 Q18.4 13.2 17.4 13.2 H3.6 Q1.6 13.2 1.4 11.2" fill="none" stroke="#5d7a96" stroke-width="1.6" stroke-linejoin="round" stroke-linecap="round"/><path d="M11.4 4.6 V10.2 H18.2" fill="none" stroke="#5d7a96" stroke-width="1.6"/><circle cx="5.4" cy="15.6" r="1.9" fill="none" stroke="#5d7a96" stroke-width="1.5"/><circle cx="14.4" cy="15.6" r="1.9" fill="none" stroke="#5d7a96" stroke-width="1.5"/></svg>
<svg class="ico" style="left:1676px;top:752.6px" width="12" height="14" viewBox="0 0 12 14"><path d="M4.2 3.2 L8.4 7.4 L4.2 11.6" fill="none" stroke="#556b82" stroke-width="1.4" stroke-linecap="round" stroke-linejoin="round"/></svg>
<div class="a" style="left:102px;top:909.9px;width:1603px;height:1px;background:#e5e5e5"></div>
<div class="cb" style="top:851.4px"></div>
<div class="t sy" style="left:160.5px;top:853.23px;font-size:15.5px;color:#0070f2;font-weight:bold;letter-spacing:0.35px">1053204</div>
<div class="t sy" style="left:247px;top:835.15px;font-size:15px;color:#0070f2;font-weight:normal;">FG126</div>
<div class="t sy" style="left:247px;top:870.88px;font-size:15.2px;color:#253547;font-weight:normal;">FIN126,MTS-DI,PD,SerialNo</div>
<div class="t sy" style="right:1268px;top:852.37px;font-size:15.8px;color:#1d2d3e;font-weight:bold;text-align:right;">5</div>
<div class="t sy" style="left:575.5px;top:852.71px;font-size:15.4px;color:#253547;font-weight:normal;">PC</div>
<div class="t sy" style="left:537.0px;width:300px;top:852.86px;font-size:15.7px;color:#0070f2;font-weight:normal;text-align:center">Released</div>
<div class="t sy" style="right:885.7px;top:840.03px;font-size:15.5px;color:#253547;font-weight:normal;text-align:right;">Thu, Sep 15, 2022</div>
<div class="t sy" style="right:885.7px;top:866.63px;font-size:15.5px;color:#253547;font-weight:normal;text-align:right;">15:23</div>
<div class="t sy" style="right:696.5px;top:840.03px;font-size:15.5px;color:#253547;font-weight:normal;text-align:right;">Thu, Sep 15, 2022</div>
<div class="t sy" style="right:696.5px;top:866.63px;font-size:15.5px;color:#253547;font-weight:normal;text-align:right;">16:00</div>
<svg class="ico" style="left:793.7555859375px;top:849.1px" width="20" height="20" viewBox="0 0 20 20"><path d="M7.5 17 A7 7 0 0 1 10 3.2" fill="none" stroke="#1d2d3e" stroke-width="1.5" stroke-linecap="round"/><path d="M9.4 0.6 L12.6 3.2 L9.4 6.2" fill="none" stroke="#1d2d3e" stroke-width="1.5" stroke-linecap="round" stroke-linejoin="round"/><path d="M14.6 6.2 L15.6 8.4 M15.8 11.6 L14.8 13.9 M13.2 15.6 L10.6 16.9" fill="none" stroke="#1d2d3e" stroke-width="1.5" stroke-linecap="round"/><path d="M6.4 12.4 L9.2 9.8 L12.2 9.8" fill="none" stroke="#1d2d3e" stroke-width="1.5" stroke-linecap="round" stroke-linejoin="round"/></svg>
<svg class="ico" style="left:982.9555859375px;top:849.1px" width="20" height="20" viewBox="0 0 20 20"><path d="M7.5 17 A7 7 0 0 1 10 3.2" fill="none" stroke="#1d2d3e" stroke-width="1.5" stroke-linecap="round"/><path d="M9.4 0.6 L12.6 3.2 L9.4 6.2" fill="none" stroke="#1d2d3e" stroke-width="1.5" stroke-linecap="round" stroke-linejoin="round"/><path d="M14.6 6.2 L15.6 8.4 M15.8 11.6 L14.8 13.9 M13.2 15.6 L10.6 16.9" fill="none" stroke="#1d2d3e" stroke-width="1.5" stroke-linecap="round"/><path d="M6.4 12.4 L9.2 9.8 L12.2 9.8" fill="none" stroke="#1d2d3e" stroke-width="1.5" stroke-linecap="round" stroke-linejoin="round"/></svg>
<div class="t sy" style="left:1156px;top:831.34px;font-size:15.6px;color:#253547;font-weight:normal;">Assembly (0010)</div>
<div class="t sy" style="left:1156px;top:862.74px;font-size:15.6px;color:#253547;font-weight:normal;">0 of 5</div>
<div class="a" style="left:1155px;top:883.4px;width:278.5px;height:6.4px;border-radius:3.2px;background:#fff3b8"></div>
<div class="a" style="left:1157.3px;top:884.2px;width:4.8px;height:4.8px;border-radius:50%;background:#e76500"></div>
<div class="a" style="left:1426.8px;top:884.2px;width:4.8px;height:4.8px;border-radius:50%;background:#e76500"></div>
<svg class="ico" style="left:1437.2px;top:877.4px" width="19.6" height="18.5" viewBox="0 0 18 17"><path d="M9 1.2 Q9.8 1.2 10.3 2 L17.2 14.4 Q17.6 15.8 16.2 16 H1.8 Q0.4 15.8 0.8 14.4 L7.7 2 Q8.2 1.2 9 1.2 Z" fill="#e76500"/><path d="M9 5.4 V10.4" stroke="#fff" stroke-width="2.2" stroke-linecap="round"/><circle cx="9" cy="13.2" r="1.2" fill="#fff"/></svg>
<svg class="ico" style="left:1482.5px;top:848.6px" width="20" height="20" viewBox="0 0 20 20"><path d="M1.6 11.6 A8.1 8.1 0 1 0 3.8 4.2" fill="none" stroke="#f53232" stroke-width="1.7" stroke-linecap="round"/><path d="M1.4 2 V7.3 H6.8" fill="none" stroke="#f53232" stroke-width="1.7" stroke-linecap="round" stroke-linejoin="round"/><path d="M9.9 5.1 V10.6 L12.9 13.5" fill="none" stroke="#f53232" stroke-width="1.7" stroke-linecap="round" stroke-linejoin="round"/></svg>
<svg class="ico" style="left:1518.8px;top:848.6px" width="20" height="20" viewBox="0 0 20 20"><rect x="7.05" y="4.75" width="6.2" height="2.3" fill="none" stroke="#f53232" stroke-width="1.5"/><path d="M10.15 7.8 V10.6 M3.35 13.2 V11.8 Q3.35 10.6 4.55 10.6 H15.75 Q16.95 10.6 16.95 11.8 V13.2" fill="none" stroke="#f53232" stroke-width="1.5"/><rect x="1.95" y="13.75" width="2.8" height="3.6" fill="none" stroke="#f53232" stroke-width="1.5"/><rect x="8.75" y="13.75" width="2.8" height="3.6" fill="none" stroke="#f53232" stroke-width="1.5"/><rect x="15.55" y="13.75" width="2.8" height="3.6" fill="none" stroke="#f53232" stroke-width="1.5"/></svg>
<svg class="ico" style="left:1555px;top:848.6px" width="20" height="20" viewBox="0 0 20 20"><path d="M2 12.4 V4.4 L11.6 3.2" fill="none" stroke="#5d7a96" stroke-width="1.6"/><path d="M5.6 15 V6.9 L15.2 5.8" fill="none" stroke="#5d7a96" stroke-width="1.6"/><path d="M9.3 10 L18 8.6 V15.4 L9.3 16.6 Z" fill="none" stroke="#5d7a96" stroke-width="1.6" stroke-linejoin="round"/></svg>
<svg class="ico" style="left:1591.5px;top:848.6px" width="20" height="20" viewBox="0 0 20 20"><path d="M10.1 3.4 L2 16.6 H18.4 L15.4 12" fill="none" stroke="#5d7a96" stroke-width="1.8" stroke-linejoin="round" stroke-linecap="round"/><path d="M10 8.6 V12.2 M10 14 V16" stroke="#5d7a96" stroke-width="1.5"/><path d="M12.8 4.3 H18.2 V6.8 H12.8 Z" fill="#5d7a96"/><path d="M12.8 8.3 H18.2 V9.8 H12.8 Z" fill="#5d7a96"/></svg>
<svg class="ico" style="left:1618.8px;top:848.6px" width="20" height="20" viewBox="0 0 20 20"><path d="M1.3 2.8 V10.2 M3.7 2.8 V10.2" stroke="#5d7a96" stroke-width="1.3" stroke-dasharray="1.4 1.3"/><path d="M4.6 3.5 H8.8 M4.6 6.3 H8.8 M4.6 9 H8.8" stroke="#5d7a96" stroke-width="1.5"/><path d="M10.2 3.2 L11.6 4.4 H16 Q16.8 4.4 17.1 5.2 L18.4 9.6 V12.2 Q18.4 13.2 17.4 13.2 H3.6 Q1.6 13.2 1.4 11.2" fill="none" stroke="#5d7a96" stroke-width="1.6" stroke-linejoin="round" stroke-linecap="round"/><path d="M11.4 4.6 V10.2 H18.2" fill="none" stroke="#5d7a96" stroke-width="1.6"/><circle cx="5.4" cy="15.6" r="1.9" fill="none" stroke="#5d7a96" stroke-width="1.5"/><circle cx="14.4" cy="15.6" r="1.9" fill="none" stroke="#5d7a96" stroke-width="1.5"/></svg>
<svg class="ico" style="left:1676px;top:852.6px" width="12" height="14" viewBox="0 0 12 14"><path d="M4.2 3.2 L8.4 7.4 L4.2 11.6" fill="none" stroke="#556b82" stroke-width="1.4" stroke-linecap="round" stroke-linejoin="round"/></svg>
<div class="cb" style="top:951.1999999999999px"></div>
<div class="t sy" style="left:160.5px;top:953.02px;font-size:15.5px;color:#0070f2;font-weight:bold;letter-spacing:0.35px">1053205</div>
<div class="t sy" style="left:247px;top:934.95px;font-size:15px;color:#0070f2;font-weight:normal;">FG126</div>
<div class="t sy" style="left:247px;top:970.68px;font-size:15.2px;color:#253547;font-weight:normal;">FIN126,MTS-DI,PD,SerialNo</div>
<div class="t sy" style="right:1268px;top:952.17px;font-size:15.8px;color:#1d2d3e;font-weight:bold;text-align:right;">5</div>
<div class="t sy" style="left:575.5px;top:952.51px;font-size:15.4px;color:#253547;font-weight:normal;">PC</div>
<div class="t sy" style="left:537.0px;width:300px;top:952.65px;font-size:15.7px;color:#0070f2;font-weight:normal;text-align:center">Released</div>
<div class="t sy" style="right:885.7px;top:939.83px;font-size:15.5px;color:#253547;font-weight:normal;text-align:right;">Wed, Sep 14, 2022</div>
<div class="t sy" style="right:885.7px;top:966.43px;font-size:15.5px;color:#253547;font-weight:normal;text-align:right;">15:24</div>
<div class="t sy" style="right:696.5px;top:939.83px;font-size:15.5px;color:#253547;font-weight:normal;text-align:right;">Thu, Sep 15, 2022</div>
<div class="t sy" style="right:696.5px;top:966.43px;font-size:15.5px;color:#253547;font-weight:normal;text-align:right;">16:00</div>
<svg class="ico" style="left:788.8742968749999px;top:948.9px" width="20" height="20" viewBox="0 0 20 20"><path d="M7.5 17 A7 7 0 0 1 10 3.2" fill="none" stroke="#1d2d3e" stroke-width="1.5" stroke-linecap="round"/><path d="M9.4 0.6 L12.6 3.2 L9.4 6.2" fill="none" stroke="#1d2d3e" stroke-width="1.5" stroke-linecap="round" stroke-linejoin="round"/><path d="M14.6 6.2 L15.6 8.4 M15.8 11.6 L14.8 13.9 M13.2 15.6 L10.6 16.9" fill="none" stroke="#1d2d3e" stroke-width="1.5" stroke-linecap="round"/><path d="M6.4 12.4 L9.2 9.8 L12.2 9.8" fill="none" stroke="#1d2d3e" stroke-width="1.5" stroke-linecap="round" stroke-linejoin="round"/></svg>
<svg class="ico" style="left:982.9555859375px;top:948.9px" width="20" height="20" viewBox="0 0 20 20"><path d="M7.5 17 A7 7 0 0 1 10 3.2" fill="none" stroke="#1d2d3e" stroke-width="1.5" stroke-linecap="round"/><path d="M9.4 0.6 L12.6 3.2 L9.4 6.2" fill="none" stroke="#1d2d3e" stroke-width="1.5" stroke-linecap="round" stroke-linejoin="round"/><path d="M14.6 6.2 L15.6 8.4 M15.8 11.6 L14.8 13.9 M13.2 15.6 L10.6 16.9" fill="none" stroke="#1d2d3e" stroke-width="1.5" stroke-linecap="round"/><path d="M6.4 12.4 L9.2 9.8 L12.2 9.8" fill="none" stroke="#1d2d3e" stroke-width="1.5" stroke-linecap="round" stroke-linejoin="round"/></svg>
<div class="t sy" style="left:1156px;top:931.14px;font-size:15.6px;color:#253547;font-weight:normal;">Assembly (0010)</div>
<div class="t sy" style="left:1156px;top:962.54px;font-size:15.6px;color:#253547;font-weight:normal;">0 of 5</div>
<div class="a" style="left:1155px;top:983.1999999999999px;width:278.5px;height:6.4px;border-radius:3.2px;background:#fff3b8"></div>
<div class="a" style="left:1157.3px;top:984.0px;width:4.8px;height:4.8px;border-radius:50%;background:#e76500"></div>
<div class="a" style="left:1426.8px;top:984.0px;width:4.8px;height:4.8px;border-radius:50%;background:#e76500"></div>
<svg class="ico" style="left:1437.2px;top:977.1999999999999px" width="19.6" height="18.5" viewBox="0 0 18 17"><path d="M9 1.2 Q9.8 1.2 10.3 2 L17.2 14.4 Q17.6 15.8 16.2 16 H1.8 Q0.4 15.8 0.8 14.4 L7.7 2 Q8.2 1.2 9 1.2 Z" fill="#e76500"/><path d="M9 5.4 V10.4" stroke="#fff" stroke-width="2.2" stroke-linecap="round"/><circle cx="9" cy="13.2" r="1.2" fill="#fff"/></svg>
<svg class="ico" style="left:1482.5px;top:948.4px" width="20" height="20" viewBox="0 0 20 20"><path d="M1.6 11.6 A8.1 8.1 0 1 0 3.8 4.2" fill="none" stroke="#f53232" stroke-width="1.7" stroke-linecap="round"/><path d="M1.4 2 V7.3 H6.8" fill="none" stroke="#f53232" stroke-width="1.7" stroke-linecap="round" stroke-linejoin="round"/><path d="M9.9 5.1 V10.6 L12.9 13.5" fill="none" stroke="#f53232" stroke-width="1.7" stroke-linecap="round" stroke-linejoin="round"/></svg>
<svg class="ico" style="left:1518.8px;top:948.4px" width="20" height="20" viewBox="0 0 20 20"><rect x="7.05" y="4.75" width="6.2" height="2.3" fill="none" stroke="#5d7a96" stroke-width="1.5"/><path d="M10.15 7.8 V10.6 M3.35 13.2 V11.8 Q3.35 10.6 4.55 10.6 H15.75 Q16.95 10.6 16.95 11.8 V13.2" fill="none" stroke="#5d7a96" stroke-width="1.5"/><rect x="1.95" y="13.75" width="2.8" height="3.6" fill="none" stroke="#5d7a96" stroke-width="1.5"/><rect x="8.75" y="13.75" width="2.8" height="3.6" fill="none" stroke="#5d7a96" stroke-width="1.5"/><rect x="15.55" y="13.75" width="2.8" height="3.6" fill="none" stroke="#5d7a96" stroke-width="1.5"/></svg>
<svg class="ico" style="left:1555px;top:948.4px" width="20" height="20" viewBox="0 0 20 20"><path d="M2 12.4 V4.4 L11.6 3.2" fill="none" stroke="#5d7a96" stroke-width="1.6"/><path d="M5.6 15 V6.9 L15.2 5.8" fill="none" stroke="#5d7a96" stroke-width="1.6"/><path d="M9.3 10 L18 8.6 V15.4 L9.3 16.6 Z" fill="none" stroke="#5d7a96" stroke-width="1.6" stroke-linejoin="round"/></svg>
<svg class="ico" style="left:1591.5px;top:948.4px" width="20" height="20" viewBox="0 0 20 20"><path d="M10.1 3.4 L2 16.6 H18.4 L15.4 12" fill="none" stroke="#5d7a96" stroke-width="1.8" stroke-linejoin="round" stroke-linecap="round"/><path d="M10 8.6 V12.2 M10 14 V16" stroke="#5d7a96" stroke-width="1.5"/><path d="M12.8 4.3 H18.2 V6.8 H12.8 Z" fill="#5d7a96"/><path d="M12.8 8.3 H18.2 V9.8 H12.8 Z" fill="#5d7a96"/></svg>
<svg class="ico" style="left:1618.8px;top:948.4px" width="20" height="20" viewBox="0 0 20 20"><path d="M1.3 2.8 V10.2 M3.7 2.8 V10.2" stroke="#5d7a96" stroke-width="1.3" stroke-dasharray="1.4 1.3"/><path d="M4.6 3.5 H8.8 M4.6 6.3 H8.8 M4.6 9 H8.8" stroke="#5d7a96" stroke-width="1.5"/><path d="M10.2 3.2 L11.6 4.4 H16 Q16.8 4.4 17.1 5.2 L18.4 9.6 V12.2 Q18.4 13.2 17.4 13.2 H3.6 Q1.6 13.2 1.4 11.2" fill="none" stroke="#5d7a96" stroke-width="1.6" stroke-linejoin="round" stroke-linecap="round"/><path d="M11.4 4.6 V10.2 H18.2" fill="none" stroke="#5d7a96" stroke-width="1.6"/><circle cx="5.4" cy="15.6" r="1.9" fill="none" stroke="#5d7a96" stroke-width="1.5"/><circle cx="14.4" cy="15.6" r="1.9" fill="none" stroke="#5d7a96" stroke-width="1.5"/></svg>
<svg class="ico" style="left:1676px;top:952.4px" width="12" height="14" viewBox="0 0 12 14"><path d="M4.2 3.2 L8.4 7.4 L4.2 11.6" fill="none" stroke="#556b82" stroke-width="1.4" stroke-linecap="round" stroke-linejoin="round"/></svg>
<div class="a" style="left:47px;top:1009px;width:1740px;height:64px;background:linear-gradient(#f5f6f7,#eceef0)"></div>
<div class="a" style="left:1773px;top:1010px;width:14px;height:63px;background:#fbfbfc"></div>
<div class="a" style="left:55px;top:1017.5px;width:1724px;height:47px;border-radius:15px;background:#fff;border:1.5px solid #b8c2cc;box-shadow:0 2px 6px rgba(0,0,0,0.08)"></div>
</body></html>
